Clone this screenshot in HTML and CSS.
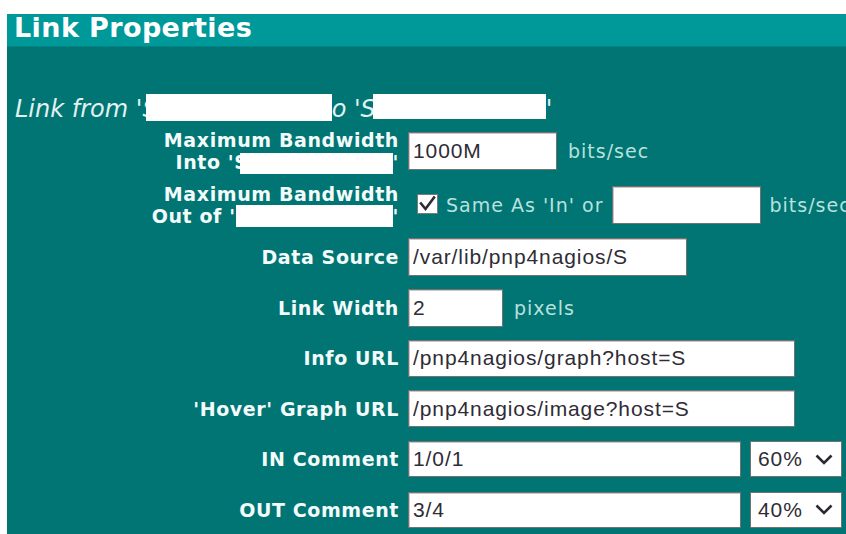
FILE: index.html
```html
<!DOCTYPE html>
<html lang="en">
<head>
<meta charset="utf-8">
<title>Link Properties</title>
<link rel="stylesheet" href="styles.css">
</head>
<body>
<div class="panel">
  <div class="panel-title">Link Properties</div>
  <p class="link-from">Link from 'S<span class="redact redact-from"></span>o 'S<span class="redact redact-to"></span>'</p>

  <div class="form">
    <div class="label">Maximum Bandwidth<br>Into 'S<span class="redact redact-name"></span>'</div>
    <div class="field">
      <input class="text w-bw" type="text" value="1000M">
      <span class="unit gap-wide">bits/sec</span>
    </div>

    <div class="label">Maximum Bandwidth<br>Out of '<span class="redact redact-name-out"></span>'</div>
    <div class="field">
      <svg class="checkbox" width="21" height="20" viewBox="0 0 21 20" aria-hidden="true">
        <rect x="0.5" y="0.5" width="20" height="19" fill="#fff" stroke="#7a7a7a"/>
        <path d="M4 9.5 L8.5 15 L17 3.5" fill="none" stroke="#2e2a33" stroke-width="2.6" stroke-linecap="square"/>
      </svg>
      <span class="unit">Same As 'In' or</span>
      <input class="text w-bw gap-input" type="text" value="">
      <span class="unit gap-narrow">bits/sec</span>
    </div>

    <div class="label">Data Source</div>
    <div class="field">
      <input class="text w-source" type="text" value="/var/lib/pnp4nagios/S">
    </div>

    <div class="label">Link Width</div>
    <div class="field">
      <input class="text w-width" type="text" value="2">
      <span class="unit gap-wide">pixels</span>
    </div>

    <div class="label">Info URL</div>
    <div class="field">
      <input class="text w-url" type="text" value="/pnp4nagios/graph?host=S">
    </div>

    <div class="label">'Hover' Graph URL</div>
    <div class="field">
      <input class="text w-url" type="text" value="/pnp4nagios/image?host=S">
    </div>

    <div class="label">IN Comment</div>
    <div class="field">
      <input class="text w-comment short" type="text" value="1/0/1">
      <div class="select short">
        <span>60%</span>
        <svg class="chevron" width="18" height="11" viewBox="0 0 18 11" aria-hidden="true">
          <path d="M1.5 1.5 L9 9 L16.5 1.5" fill="none" stroke="#2a2a33" stroke-width="2.6"/>
        </svg>
      </div>
    </div>

    <div class="label">OUT Comment</div>
    <div class="field">
      <input class="text w-comment short" type="text" value="3/4">
      <div class="select short">
        <span>40%</span>
        <svg class="chevron" width="18" height="11" viewBox="0 0 18 11" aria-hidden="true">
          <path d="M1.5 1.5 L9 9 L16.5 1.5" fill="none" stroke="#2a2a33" stroke-width="2.6"/>
        </svg>
      </div>
    </div>
  </div>
</div>
</body>
</html>
```

FILE: styles.css
```css
html, body {
  margin: 0;
  padding: 0;
  background: #ffffff;
  overflow: hidden;
}

body {
  font-family: "DejaVu Sans", Verdana, sans-serif;
}

/* Dialog panel */
.panel {
  margin: 14px 0 0 7px;
  height: 520px;
  background: #007573;
  color: #f2fafa;
  overflow: hidden;
}

.panel-title {
  padding: 0 0 5px 7px;
  background: #009999;
  border-bottom: 1px solid #008584;
  font-weight: bold;
  font-size: 27px;
  line-height: 27px;
  letter-spacing: 0.4px;
  color: #ffffff;
}

.link-from {
  margin: 47px 0 0 0;
  padding-left: 8px;
  font-style: italic;
  font-size: 24px;
  line-height: 30px;
  color: #e2f2f1;
  white-space: nowrap;
}

/* White blocks hiding host names */
.redact {
  display: inline-block;
  background: #ffffff;
  vertical-align: top;
}

.redact-from {
  width: 186px;
  height: 27px;
  margin-left: -12px;
}

.redact-to {
  width: 173px;
  height: 25px;
  margin-left: -3px;
}

.redact-name {
  width: 153px;
  height: 21px;
  margin-left: -9px;
  vertical-align: -4.5px;
}

.redact-name-out {
  width: 157px;
  height: 22px;
  vertical-align: -4.5px;
}

/* Form grid: right-aligned labels, fields to the right */
.form {
  display: grid;
  grid-template-columns: 392px 1fr;
  grid-template-rows: 54.5px 53px 51px repeat(5, 50.5px);
  column-gap: 9px;
  align-items: center;
}

.label {
  text-align: right;
  font-weight: bold;
  font-size: 19px;
  line-height: 22px;
  letter-spacing: 0.6px;
  white-space: nowrap;
  color: #f4fbfb;
}

.field {
  display: flex;
  align-items: baseline;
  white-space: nowrap;
}

.unit {
  font-size: 19px;
  letter-spacing: 1px;
  color: #b9e1dd;
}

.checkbox {
  display: block;
  flex: none;
  margin: 0 8px 0 9px;
  position: relative;
  top: 2px;
}

/* Text inputs */
.text {
  box-sizing: border-box;
  height: 38px;
  margin: 0;
  padding: 0 4px;
  border: 1px solid #727272;
  box-shadow: inset 1px 1px 0 #c8c8c8;
  background: #ffffff;
  font-family: "Liberation Sans", Arial, sans-serif;
  font-size: 21px;
  letter-spacing: 0.9px;
  color: #2f2c36;
  outline: none;
}

.w-bw { width: 149px; }
.w-source { width: 279px; }
.w-width { width: 95px; }
.w-url { width: 387px; height: 37px; }
.w-comment { width: 333px; }

.short { height: 36px; }

/* Spacing between items on one field row */
.gap-wide { margin-left: 11px; }
.gap-narrow { margin-left: 8px; }
.gap-input { margin-left: 9px; }

/* Drop-down */
.select {
  box-sizing: border-box;
  width: 92px;
  margin-left: 9px;
  padding: 0 7px 0 7px;
  display: flex;
  align-items: center;
  justify-content: space-between;
  border: 1px solid #727272;
  background: #ffffff;
  font-family: "Liberation Sans", Arial, sans-serif;
  font-size: 21px;
  letter-spacing: 0.9px;
  color: #2f2c36;
}

.chevron {
  display: block;
  margin-right: 1px;
}
```
